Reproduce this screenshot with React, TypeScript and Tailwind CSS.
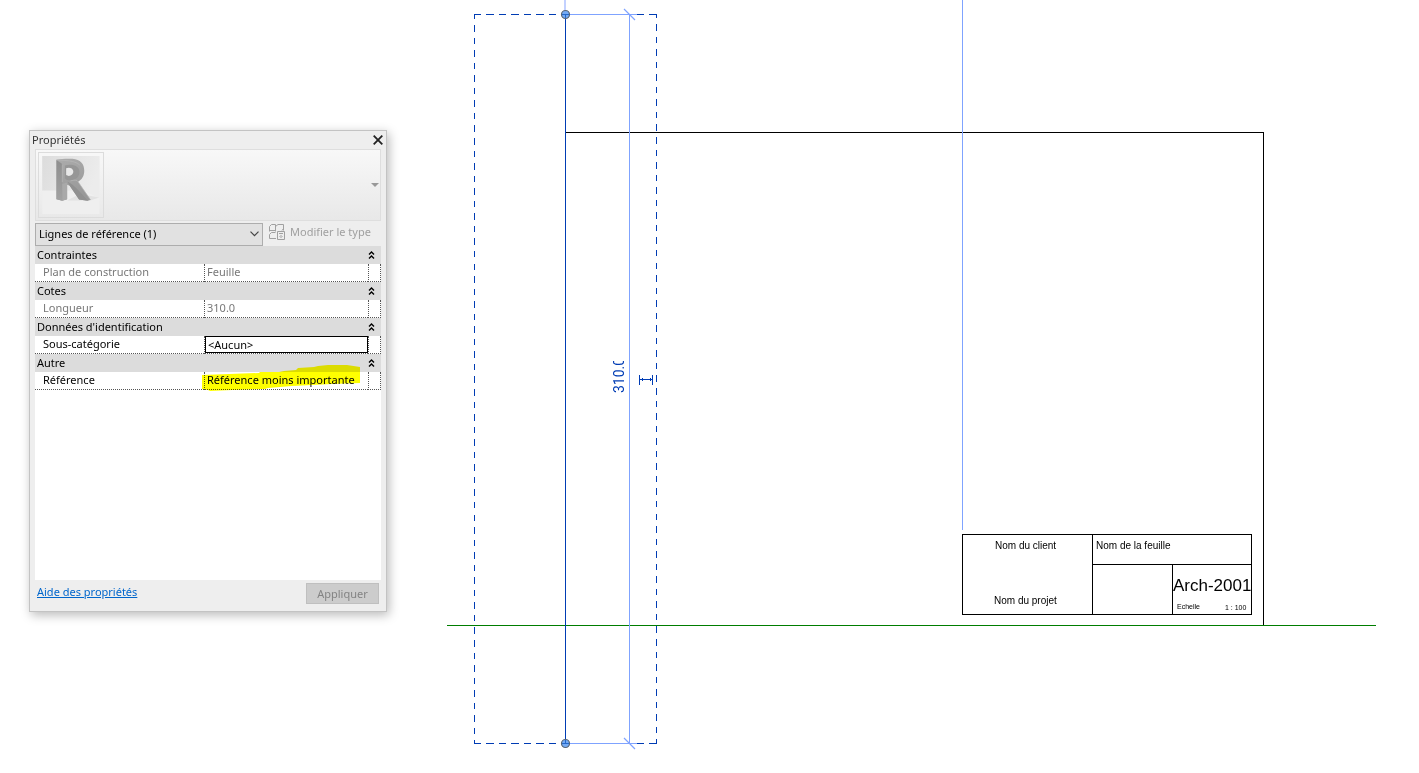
import { useState } from "react";

type Group = {
  title: string;
  label: string;
  value: string;
  kind: "readonly" | "edit" | "marked";
};

const groups: Group[] = [
  { title: "Contraintes", label: "Plan de construction", value: "Feuille", kind: "readonly" },
  { title: "Cotes", label: "Longueur", value: "310.0", kind: "readonly" },
  { title: "Données d'identification", label: "Sous-catégorie", value: "<Aucun>", kind: "edit" },
  { title: "Autre", label: "Référence", value: "Référence moins importante", kind: "marked" },
];

function FamilyLogo() {
  return (
    <svg viewBox="54 96 198 198" className="size-full" aria-hidden="true">
      <defs>
        <linearGradient id="wall" x1="0" y1="0" x2="1" y2="0.3">
          <stop offset="0" stopColor="#dcdcdc" />
          <stop offset="1" stopColor="#ececec" />
        </linearGradient>
        <linearGradient id="face" x1="0" y1="0" x2="0.4" y2="1">
          <stop offset="0" stopColor="#acacac" />
          <stop offset="1" stopColor="#989898" />
        </linearGradient>
        <linearGradient id="stem" x1="0" y1="0" x2="0" y2="1">
          <stop offset="0" stopColor="#8e8e8e" />
          <stop offset="1" stopColor="#a2a2a2" />
        </linearGradient>
      </defs>
      <path d="M64 105H241V285H64Z" fill="#efefef" />
      <path d="M64 105H241V236L190 212H64Z" fill="url(#wall)" />
      <path d="M141 243L180 223L240 234L213 243Z" fill="#e2e2e2" />
      <path
        d="M108 117C122 114 142 113 158 114C182 116 194 130 194 151C194 167 187 178 175 185L214 241L205 244L178 240L149 197L141 194V239L126 244L108 239Z"
        fill="url(#face)"
      />
      <path d="M108 118L126 130V244L108 239Z" fill="url(#stem)" />
      <path d="M126 192L141 187V239L126 244Z" fill="#a9a9a9" />
      <path
        d="M134 135C148 130 175 132 179 151C181 170 168 179 151 181C142 181 134 178 134 172Z"
        fill="#969696"
      />
      <path d="M142 185C163 193 184 221 206 244L178 240L149 197Z" fill="#909090" />
      <path
        d="M138 143C146 139 159 142 160 152C161 161 154 167 146 167L138 164Z"
        fill="#e8e8e8"
      />
      <path
        d="M108 117C135 120 163 118 180 133M126 131V186M151 182C164 180 171 178 175 185L213 241"
        fill="none"
        stroke="#b9b9b9"
        strokeWidth="2"
      />
    </svg>
  );
}

function EditTypeIcon() {
  return (
    <svg viewBox="0 0 16 16" className="size-4 shrink-0" fill="none" stroke="#a0a0a0" aria-hidden="true">
      <path d="M2.5 .5H6.5V6.5H.5V2.5ZM.5 4.5V7.5" />
      <path d="M6.5 7.5V2.5L9 .5H14.5V6.5M14.5 4.5L13 6.5" />
      <path d="M7 14.5H.5V10.5L2.5 8.5H6.5" />
      <path d="M8.5 7.5H15.5V15.5H8.5Z" />
      <path d="M10 9.5H14M11.5 11.5H12.5M10.5 12.5H11.5M12.5 12.5H13.5M11.5 13.5H12.5" />
    </svg>
  );
}

function CollapseIcon() {
  return (
    <svg viewBox="0 0 7 8" className="h-2 w-[7px]" fill="none" stroke="#000" strokeWidth="1.4" aria-hidden="true">
      <path d="M1 3.5L3.5 1L6 3.5M1 7.5L3.5 5L6 7.5" />
    </svg>
  );
}

function PropertiesPanel() {
  const [sub, setSub] = useState("<Aucun>");
  return (
    <aside className="mt-[130px] ml-[29px] flex h-[482px] w-[358px] shrink-0 flex-col border border-[#c3c3c3] bg-[#eeeeee] px-[5px] text-[11px] leading-4 text-black shadow-[2px_3px_10px_rgba(0,0,0,0.28)]">
      <header className="-mx-[3px] flex h-[18px] shrink-0 items-center justify-between">
        <h1 className="text-[#333]">Propriétés</h1>
        <button type="button" aria-label="Fermer" className="flex h-4 w-3 items-center justify-center">
          <svg viewBox="0 0 10 10" className="size-2.5" stroke="#222" strokeWidth="1.8">
            <path d="M.7 .7L9.3 9.3M9.3 .7L.7 9.3" />
          </svg>
        </button>
      </header>

      <div className="flex h-[72px] shrink-0 items-center justify-between border border-[#dedede] bg-linear-to-b from-[#f8f8f8] to-[#e8e8e8] pl-0.5">
        <div className="size-[66px] border border-[#dcdcdc]">
          <FamilyLogo />
        </div>
        <button type="button" aria-label="Choisir un type" className="flex h-full w-2.5 items-center justify-center">
          <svg viewBox="0 0 8 4" className="h-1 w-2" fill="#999">
            <path d="M0 0H8L4 4Z" />
          </svg>
        </button>
      </div>

      <div className="flex h-[25px] shrink-0 items-center pt-px">
        <div className="relative w-[228px]">
          <select
            aria-label="Sélection"
            className="block h-[23px] w-full appearance-none border border-[#adadad] bg-[#e1e1e1] pl-[3px]"
          >
            <option>Lignes de référence (1)</option>
          </select>
          <svg
            viewBox="0 0 9 6"
            className="pointer-events-none absolute top-2 right-1 h-1.5 w-[9px]"
            fill="none"
            stroke="#444"
            strokeWidth="1.2"
          >
            <path d="M.5 .7L4.5 4.7L8.5 .7" />
          </svg>
        </div>
        <button type="button" disabled className="ml-1.5 flex items-center gap-[5px] pb-1 whitespace-nowrap text-[#a0a0a0]">
          <EditTypeIcon />
          Modifier le type
        </button>
      </div>

      <div className="flex-1 bg-white">
        <table className="w-full table-fixed border-separate border-spacing-0">
          <colgroup>
            <col className="w-[169px]" />
            <col />
            <col className="w-[13px]" />
          </colgroup>
          {groups.map((g) => (
            <tbody key={g.title}>
              <tr className="h-[18px] bg-[#dcdcdc]">
                <th colSpan={3} scope="rowgroup" className="p-0 text-left font-normal">
                  <div className="flex items-center justify-between pr-1.5 pl-0.5">
                    {g.title}
                    <button type="button" aria-label={`Réduire ${g.title}`}>
                      <CollapseIcon />
                    </button>
                  </div>
                </th>
              </tr>
              <tr className={g.kind === "readonly" ? "h-[18px] text-[#787878]" : "h-[18px]"}>
                <th scope="row" className="border-b border-dotted border-[#555] p-0 pl-2 text-left align-top font-normal">
                  {g.label}
                </th>
                <td className="relative border-b border-l border-dotted border-[#555] p-0 align-top whitespace-nowrap">
                  {g.kind === "edit" ? (
                    <input
                      aria-label={g.label}
                      value={sub}
                      onChange={(e) => setSub(e.target.value)}
                      className="block h-[17px] w-full border border-black bg-white pl-0.5 leading-4 outline-none"
                    />
                  ) : (
                    <span className="block pl-0.5">{g.value}</span>
                  )}
                  {g.kind === "marked" && (
                    <svg
                      viewBox="0 0 160 28"
                      className="pointer-events-none absolute -top-2 -left-[3px] h-7 w-40 mix-blend-multiply"
                      fill="#ff0"
                      aria-hidden="true"
                    >
                      <path d="M0 11L57 9L58 8H77L82 7L94 6L96 4L112 3L116 2L126 1H145L158 3V19L130 20L110 21L90 22L66 24L63 25L30 26L8 27L6 26L0 25Z" />
                    </svg>
                  )}
                </td>
                <td className="border-x border-b border-dotted border-[#555] p-0" />
              </tr>
            </tbody>
          ))}
        </table>
      </div>

      <footer className="flex h-[31px] shrink-0 items-start justify-between pt-[3px] pr-0.5 pl-0.5">
        <a href="#aide" className="pt-px text-[#0066cc] underline">
          Aide des propriétés
        </a>
        <button
          type="button"
          disabled
          className="h-[21px] w-[73px] border border-[#bfbfbf] bg-[#cccccc] text-[#838383]"
        >
          Appliquer
        </button>
      </footer>
    </aside>
  );
}

function SheetDrawing() {
  return (
    <svg
      viewBox="417 0 1002 773"
      className="block w-full"
      fill="none"
      role="img"
      aria-label="Cartouche de la feuille"
      fontFamily="'Liberation Sans', Arial, sans-serif"
    >
      <defs>
        <clipPath id="dimension-clip">
          <rect x="610" y="361" width="18" height="34" />
        </clipPath>
      </defs>

      {/* sheet frame and title block */}
      <g stroke="#000" shapeRendering="crispEdges">
        <path d="M565.5 132.5H1263.5V625" />
        <path d="M962.5 534.5H1251.5V614.5H962.5ZM1092.5 534V614M1092 564.5H1251M1172.5 564V614" />
      </g>
      <path d="M447 625.5H1376" stroke="#007d00" shapeRendering="crispEdges" />

      {/* reference planes */}
      <g stroke="#7fa3ff" shapeRendering="crispEdges">
        <path d="M962.5 0V530" />
        <path d="M629.5 14V743M565 14.5H637M565 743.5H637" />
      </g>
      <path d="M565 0V14" stroke="#b4c6ff" strokeWidth="1.6" />
      <path d="M624 9L635 20M624 738L635 749" stroke="#7fa3ff" strokeWidth="1.2" />

      {/* selection outline */}
      <g stroke="#003cb4" shapeRendering="crispEdges">
        <path d="M474 14.5H565M474 743.5H565" strokeDasharray="7.5 5.05" strokeDashoffset="0.5" />
        <path d="M637 14.5H644M649 14.5H657M637 743.5H644M649 743.5H657" />
        <path d="M474.5 14V744" strokeDasharray="6.5 6.05" strokeDashoffset="1.5" />
        <path d="M656.5 14V744" strokeDasharray="6.5 6.05" strokeDashoffset="2.5" />
        <path d="M565.5 14V743" />
        <path d="M639.5 375V385M652.5 375V385M639 379.5H653M642.5 378V381M650.5 378V381" />
      </g>

      <g fill="#73aaf5" stroke="#596674" strokeWidth="1.2">
        <circle cx="565.5" cy="14.5" r="4" />
        <circle cx="565.5" cy="743.5" r="4" />
      </g>
      <path d="M562 14.5H569M565.5 14V18M562 743.5H569M565.5 740V744" stroke="#2468c8" />

      <g clipPath="url(#dimension-clip)">
        <text
          transform="translate(624 393) rotate(-90)"
          fill="#003cb4"
          fontSize="14"
          fontFamily="Roboto, 'Liberation Sans', sans-serif"
        >
          310.0
        </text>
      </g>

      <g fill="#000" fontSize="10">
        <text x="995" y="549">Nom du client</text>
        <text x="994" y="604">Nom du projet</text>
        <text x="1096" y="549">Nom de la feuille</text>
        <text x="1173" y="591" fontSize="17">Arch-2001</text>
        <text x="1177" y="609" fontSize="7">Echelle</text>
        <text x="1225" y="610" fontSize="7">1 : 100</text>
      </g>
    </svg>
  );
}

export default function App() {
  return (
    <main className="flex min-h-screen items-start overflow-hidden bg-white font-['Noto_Sans','Open_Sans',sans-serif]">
      <PropertiesPanel />
      <section className="ml-[30px] min-w-0 flex-1">
        <SheetDrawing />
      </section>
    </main>
  );
}
